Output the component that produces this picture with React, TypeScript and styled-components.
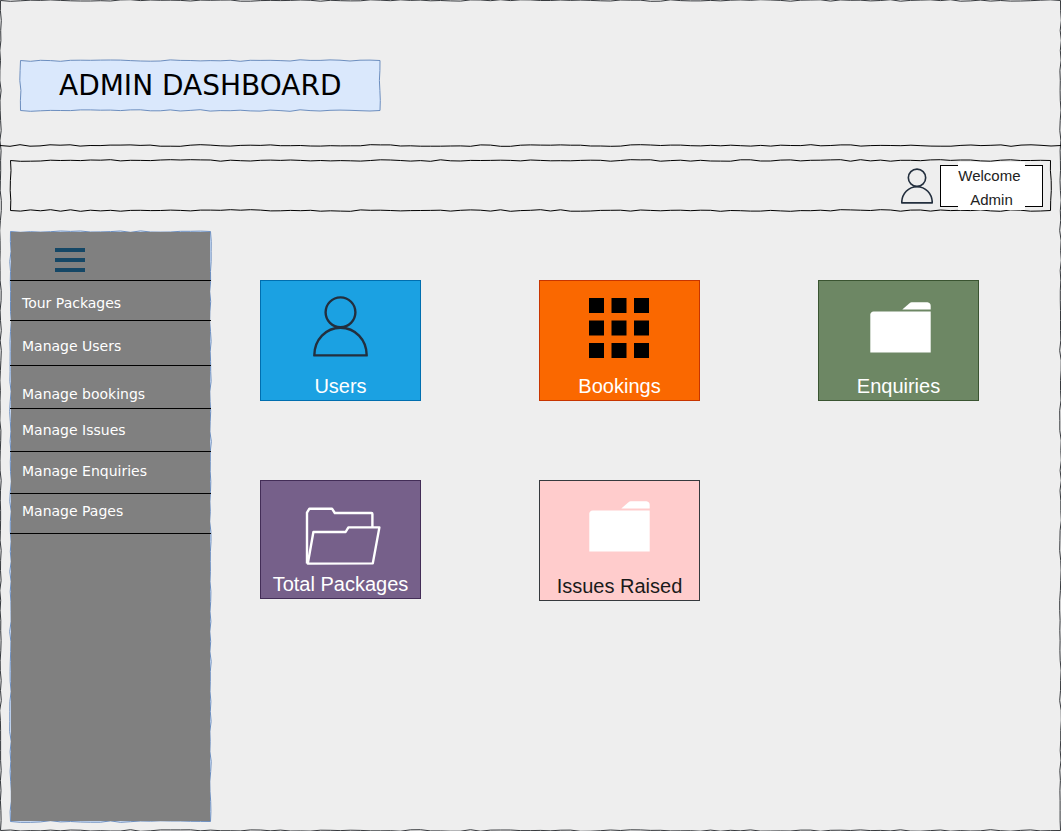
import React, { useLayoutEffect, useRef, useState } from "react";
import styled, { createGlobalStyle } from "styled-components";

const GlobalStyle = createGlobalStyle`
  *, *::before, *::after { box-sizing: border-box; }
  body { margin: 0; background: #eeeeee; }
`;

const sans = `"Liberation Sans", Arial, sans-serif`;
const humanist = `"DejaVu Sans", Verdana, sans-serif`;

/* ---------- Hand-drawn outlines ---------- */

type Point = [number, number];

function makeRandom(seed: number) {
  let state = seed;
  return () => {
    state = (state * 16807) % 2147483647;
    return state / 2147483647;
  };
}

function roughLine(from: Point, to: Point, random: () => number): Point[] {
  const length = Math.hypot(to[0] - from[0], to[1] - from[1]);
  const steps = Math.max(1, Math.round(length / 10));
  const nx = (to[1] - from[1]) / (length || 1);
  const ny = -(to[0] - from[0]) / (length || 1);
  const points: Point[] = [];
  for (let i = 0; i <= steps; i++) {
    const t = i / steps;
    const shift = i === 0 || i === steps ? 0 : (random() - 0.5) * 1.7;
    points.push([
      from[0] + (to[0] - from[0]) * t + nx * shift,
      from[1] + (to[1] - from[1]) * t + ny * shift,
    ]);
  }
  return points;
}

const toPath = (points: Point[]) =>
  points.map(([x, y], i) => `${i ? "L" : "M"}${x.toFixed(1)} ${y.toFixed(1)}`).join("");

const OutlineSvg = styled.svg<{ $clip?: boolean }>`
  position: absolute;
  inset: 0;
  width: 100%;
  height: 100%;
  overflow: ${(p) => (p.$clip ? "hidden" : "visible")};
  pointer-events: none;
`;

interface OutlineProps {
  stroke: string;
  fill?: string;
  core?: string;
  seed: number;
  clip?: boolean;
  bottomOnly?: boolean;
}

function RoughOutline({ stroke, fill = "none", core, seed, clip, bottomOnly }: OutlineProps) {
  const ref = useRef<SVGSVGElement>(null);
  const [size, setSize] = useState({ w: 0, h: 0 });

  useLayoutEffect(() => {
    const node = ref.current;
    if (!node) return;
    const measure = () => {
      const box = node.getBoundingClientRect();
      setSize({ w: box.width, h: box.height });
    };
    measure();
    const observer = new ResizeObserver(measure);
    observer.observe(node);
    return () => observer.disconnect();
  }, []);

  const random = makeRandom(seed);
  const r = size.w - 0.5;
  const b = size.h - 0.5;
  const points = bottomOnly
    ? roughLine([0, b], [size.w, b], random)
    : [
        ...roughLine([0.5, 0.5], [r, 0.5], random),
        ...roughLine([r, 0.5], [r, b], random),
        ...roughLine([r, b], [0.5, b], random),
        ...roughLine([0.5, b], [0.5, 0.5], random),
      ];

  return (
    <OutlineSvg ref={ref} $clip={clip} aria-hidden="true">
      {size.w > 0 && (
        <>
          <path d={toPath(points)} fill={fill} stroke={stroke} />
          {core && <rect x="1" y="1" width={size.w - 2} height={size.h - 2} fill={core} />}
        </>
      )}
    </OutlineSvg>
  );
}

/* ---------- Page frame ---------- */

const Page = styled.div`
  position: relative;
  display: flex;
  flex-direction: column;
  min-height: 100vh;
  padding-bottom: 9px;
  background: #eeeeee;
`;

const Header = styled.header`
  position: relative;
  display: flex;
  align-items: flex-start;
  padding: 60px 20px 35px;
`;

const TitlePlate = styled.div`
  position: relative;
  padding: 0 39px;
`;

const Title = styled.h1`
  position: relative;
  margin: 0;
  font: 400 28px/51px ${humanist};
  color: #000;
  white-space: nowrap;
`;

const Toolbar = styled.div`
  position: relative;
  display: flex;
  align-items: center;
  justify-content: flex-end;
  gap: 7px;
  height: 51px;
  margin: 14px 10px 0;
  padding-right: 8px;
`;

const Welcome = styled.div`
  position: relative;
  display: flex;
  align-items: center;
  justify-content: center;
  width: 103px;
  height: 42px;
  border: 1px solid #000;
  background: #fff;
`;

const WelcomeText = styled.p`
  flex: none;
  height: 48px;
  margin: 0;
  padding-top: 2px;
  background: #fff;
  color: #222;
  font: 15px/24px ${sans};
  text-align: center;
`;

const Body = styled.div`
  display: flex;
  flex: 1;
  margin: 20px 0 0 10px;
`;

/* ---------- Sidebar ---------- */

const Sidebar = styled.aside`
  position: relative;
  flex: none;
  width: 201px;
`;

const MenuTop = styled.div`
  position: relative;
  display: flex;
  height: 50px;
  padding: 17px 45px 0;
  border-bottom: 1px solid #000;
`;

const MenuButton = styled.button`
  display: flex;
  flex-direction: column;
  gap: 6px;
  width: 30px;
  height: 24px;
  padding: 0;
  border: 0;
  background: none;
  cursor: pointer;
`;

const Bar = styled.span`
  height: 4px;
  width: 30px;
  background: #154766;
`;

const MenuList = styled.ul`
  position: relative;
  margin: 0;
  padding: 0;
  list-style: none;
`;

const MenuItem = styled.li<{ $top: number; $bottom: number }>`
  padding: ${(p) => p.$top}px 12px ${(p) => p.$bottom}px;
  border-bottom: 1px solid #000;
`;

const MenuLink = styled.a`
  display: block;
  color: #fff;
  font: 400 14px/20px ${humanist};
  text-decoration: none;
`;

/* ---------- Cards ---------- */

const Cards = styled.main`
  flex: 1;
  display: grid;
  grid-template-columns: repeat(auto-fill, 161px);
  align-content: start;
  align-items: start;
  gap: 79px 118px;
  padding: 49px;
`;

const Card = styled.a<{ $fill: string; $edge: string; $ink: string; $short?: boolean }>`
  display: flex;
  flex-direction: column;
  align-items: center;
  justify-content: flex-end;
  height: ${(p) => (p.$short ? 119 : 121)}px;
  padding-bottom: 2px;
  border: 1px solid ${(p) => p.$edge};
  background: ${(p) => p.$fill};
  color: ${(p) => p.$ink};
  font: 20px/24px ${sans};
  text-decoration: none;
  white-space: nowrap;
`;

const CardIcon = styled.svg`
  display: block;
  width: 91px;
  height: 80px;
`;

const SmallIcon = styled.svg`
  position: relative;
  display: block;
  width: 32px;
  height: 36px;
`;

const PersonShape = ({ weight }: { weight: number }) => (
  <g fill="none" stroke="#232f3e" strokeWidth={weight} strokeLinejoin="round">
    <circle cx="45.5" cy="18.3" r="14.9" />
    <path d="M19.3 61.4C19.3 45.5 31 33.7 45.5 33.7S71.7 45.5 71.7 61.4Z" />
  </g>
);

const PersonIcon = () => (
  <CardIcon viewBox="0 0 91 80" aria-hidden="true">
    <PersonShape weight={2.4} />
  </CardIcon>
);

const GridIcon = () => (
  <CardIcon viewBox="0 0 91 80" aria-hidden="true">
    {[4, 26.5, 49].map((y) =>
      [15, 37.5, 60].map((x) => <rect key={`${x}-${y}`} x={x} y={y} width="15" height="15" />)
    )}
  </CardIcon>
);

const FolderIcon = ({ view = "0 0 91 80" }: { view?: string }) => (
  <CardIcon viewBox={view} fill="#fff" aria-hidden="true">
    <path d="M49.3 15.5L56.8 8.9Q57.6 8.3 58.6 8.3H74.5Q77.7 8.8 77.7 12V15.5Z" />
    <path d="M17.3 58.5V20.6Q17.6 17.8 20.6 17.5H77.7V58.5Z" />
  </CardIcon>
);

const OpenFolderIcon = () => (
  <CardIcon
    viewBox="0 0 91 80"
    fill="none"
    stroke="#fff"
    strokeWidth="2.4"
    strokeLinejoin="round"
    aria-hidden="true"
  >
    <path d="M12 71.5V20.7L14.4 16.7H37L39.8 21H76.5Q77.4 21 77.4 22V35" />
    <path d="M12.8 71.6L18.4 40H50.6L53.4 35.4H84.4L77.8 71.4Z" />
  </CardIcon>
);

const menu = [
  { label: "Tour Packages", top: 12, bottom: 7 },
  { label: "Manage Users", top: 15, bottom: 9 },
  { label: "Manage bookings", top: 18, bottom: 4 },
  { label: "Manage Issues", top: 11, bottom: 11 },
  { label: "Manage Enquiries", top: 9, bottom: 12 },
  { label: "Manage Pages", top: 7, bottom: 12 },
];

export default function App() {
  return (
    <Page>
      <GlobalStyle />
      <RoughOutline stroke="#36393d" seed={71} clip />
      <Header>
        <RoughOutline stroke="#000" seed={912} bottomOnly />
        <TitlePlate>
          <RoughOutline stroke="#6c8ebf" fill="#dae8fc" seed={35} />
          <Title>ADMIN DASHBOARD</Title>
        </TitlePlate>
      </Header>

      <Toolbar>
        <RoughOutline stroke="#000" seed={4410} />
        <SmallIcon viewBox="18 2 55 61" aria-hidden="true">
          <PersonShape weight={2.8} />
        </SmallIcon>
        <Welcome>
          <WelcomeText>
            Welcome&nbsp;
            <br />
            Admin
          </WelcomeText>
        </Welcome>
      </Toolbar>

      <Body>
        <Sidebar>
          <RoughOutline stroke="#6c8ebf" fill="#dae8fc" core="#808080" seed={208} />
          <MenuTop>
            <MenuButton type="button" aria-label="Menu">
              <Bar />
              <Bar />
              <Bar />
            </MenuButton>
          </MenuTop>
          <nav>
            <MenuList>
              {menu.map((item) => (
                <MenuItem key={item.label} $top={item.top} $bottom={item.bottom}>
                  <MenuLink href="#">{item.label}</MenuLink>
                </MenuItem>
              ))}
            </MenuList>
          </nav>
        </Sidebar>

        <Cards>
          <Card href="#" $fill="#1ba1e2" $edge="#006eaf" $ink="#fff">
            <PersonIcon />
            Users
          </Card>
          <Card href="#" $fill="#fa6800" $edge="#c73500" $ink="#fff">
            <GridIcon />
            Bookings
          </Card>
          <Card href="#" $fill="#6d8764" $edge="#3a5431" $ink="#fff">
            <FolderIcon />
            Enquiries
          </Card>
          <Card href="#" $fill="#76608a" $edge="#432d57" $ink="#fff" $short>
            <OpenFolderIcon />
            Total Packages
          </Card>
          <Card href="#" $fill="#ffcccc" $edge="#36393d" $ink="#1a1a1a">
            <FolderIcon view="2 1 91 80" />
            Issues Raised
          </Card>
        </Cards>
      </Body>
    </Page>
  );
}
